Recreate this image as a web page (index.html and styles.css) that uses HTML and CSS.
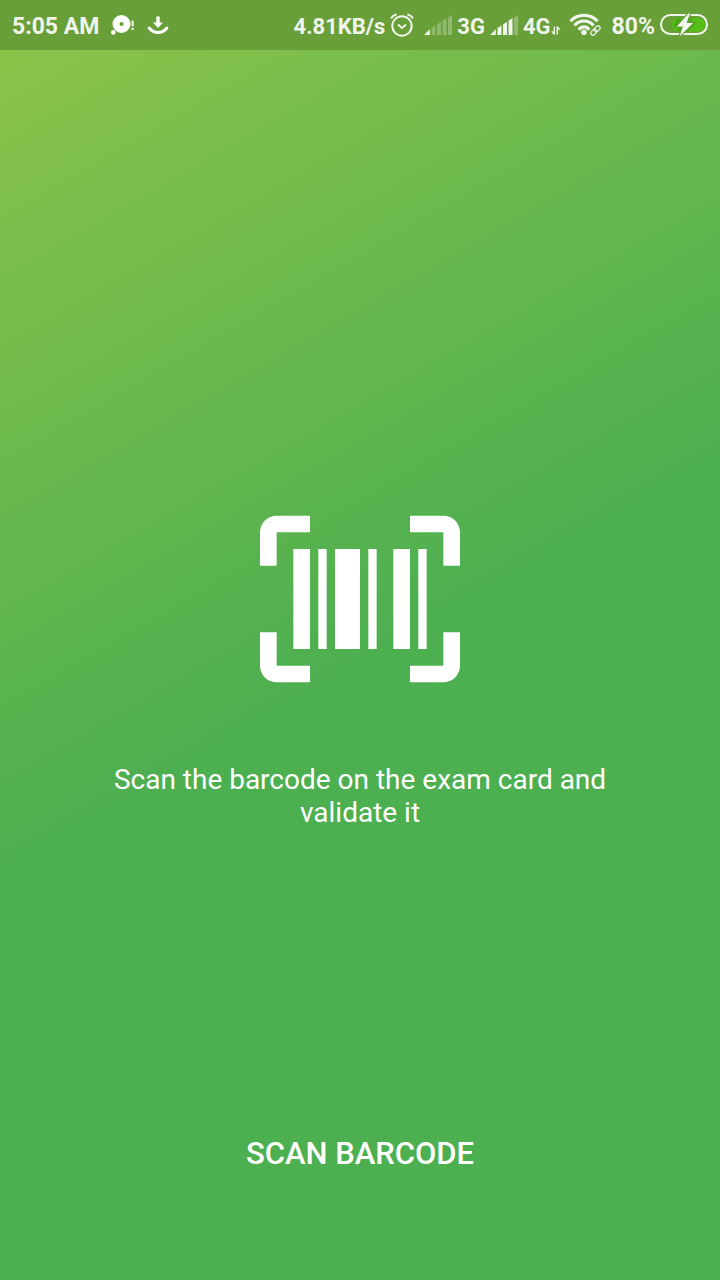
FILE: index.html
```html
<!DOCTYPE html>
<html lang="en">
<head>
<meta charset="utf-8">
<meta name="viewport" content="width=device-width, initial-scale=1">
<title>Scan barcode</title>
<link rel="stylesheet" href="styles.css">
</head>
<body>
<header class="status">
  <div class="status-left">
    <span class="status-text time">5:05 AM</span>
    <svg class="icon" width="24" height="24" viewBox="0 0 24 24" aria-hidden="true">
      <path fill="#fff" fill-rule="evenodd" d="M10.500 2a9 9 0 1 1 0 18 9 9 0 0 1 0-18zM10.500 9a2 2 0 1 0 0 4 2 2 0 0 0 0-4z"/>
      <circle cx="2.300" cy="19.400" r="2.300" fill="#fff"/>
      <path fill="#e8f0e0" d="M20.500 7.500h2.200v6h-2.200zM20.500 15h2.200v2h-2.200z"/>
    </svg>
    <svg class="icon" width="22" height="24" viewBox="0 0 22 24" aria-hidden="true">
      <path fill="#fff" d="M9.300 3.500h3.400v6h3.300l-5 5.500-5-5.500h3.300z"/>
      <path fill="none" stroke="#fff" stroke-width="3" stroke-linecap="round" d="M2.200 15c4.500 6 13.100 6 17.600 0"/>
    </svg>
  </div>
  <div class="status-right">
    <span class="status-text">4.81KB/s</span>
    <svg class="icon alarm" width="24" height="26" viewBox="0 0 24 26" fill="none" stroke="#f0f5eb" stroke-width="2" aria-hidden="true">
      <circle cx="12" cy="14" r="9.700"/>
      <path d="M8 12.500l4 3.500 4-3.500M1 6.500C2 4.500 4 3 6.500 2.200M23 6.500C22 4.500 20 3 17.500 2.200"/>
    </svg>
    <svg class="icon" width="28" height="22" viewBox="0 0 28 22" fill="#f0f5eb" aria-hidden="true">
      <path d="M0 21l5.800-5.800V21z"/>
      <path opacity=".3" d="M7.500 14l4-2.500V21h-4zM13 10.500l4-2.800V21h-4zM18.500 6.800l4-2.800v17h-4zM24 3.500l4-2.500v20h-4z"/>
    </svg>
    <span class="status-text">3G</span>
    <svg class="icon" width="28" height="22" viewBox="0 0 28 22" fill="#f0f5eb" aria-hidden="true">
      <path d="M0 21l5.800-5.800V21zM7.500 14l4-2.500V21h-4zM13 10.500l4-2.800V21h-4zM18.500 6.800l4-2.800v17h-4z"/>
      <path opacity=".3" d="M24 3.500l4-2.500v20h-4z"/>
    </svg>
    <span class="network">
      <span class="status-text">4G</span>
      <svg class="icon" width="10" height="22" viewBox="0 0 10 22" fill="none" stroke="#f0f5eb" stroke-width="1.400" aria-hidden="true">
        <path d="M3.300 12.500v8M3.300 20.200l-2.500-3M6.200 20.500v-8M6.200 12.800l2.500 3"/>
      </svg>
    </span>
    <svg class="icon wifi" width="34" height="24" viewBox="0 0 34 24" fill="none" stroke="#f0f5eb" aria-hidden="true">
      <path stroke-width="3.200" d="M1.500 8.300c7-7.800 20-7.800 27 0M5.500 12.500c5-6 14-6 19 0M9.700 16.700c3-3.700 7.600-3.700 10.600 0"/>
      <circle cx="15" cy="19.300" r="2.800" fill="#f0f5eb" stroke="none"/>
      <g transform="rotate(-45 26.500 17.500)" stroke-width="1.200">
        <rect x="20.800" y="15.400" width="6.500" height="4.200" rx="2.100"/>
        <rect x="25.700" y="15.400" width="6.500" height="4.200" rx="2.100"/>
      </g>
    </svg>
    <span class="status-text percent">80%</span>
    <svg class="icon" width="48" height="24" viewBox="0 0 48 24" aria-hidden="true">
      <rect x="12" y="5" width="33" height="13.500" rx="6" fill="#53bf16"/>
      <path d="M20 5.500h-4L13.500 14h6l-2 4.500h11l8.500-10h-6l1.500-3z" fill="#4aa516"/>
      <rect x="1" y="2" width="46" height="19" rx="9.500" fill="none" stroke="#f0f5eb" stroke-width="2"/>
      <path d="M28.500 .5L17 13.500h6L19.500 23.500 33 10h-6.500L30 .5z" fill="#f5faf0" stroke="#689f38" stroke-width="2.400" paint-order="stroke"/>
    </svg>
  </div>
</header>
<main class="screen">
  <section class="prompt">
    <svg class="barcode" viewBox="0 0 24 24" fill="#fff" aria-hidden="true">
      <path d="M4 6h2v12H4zM7 6h1v12H7zM9 6h3v12H9zM13 6h1v12h-1zM16 6h2v12h-2zM19 6h1v12h-1zM2 4v4H0V4a2 2 0 0 1 2-2h4v2zM22 2a2 2 0 0 1 2 2v4h-2V4h-4V2zM2 16v4h4v2H2a2 2 0 0 1-2-2v-4zM22 20v-4h2v4a2 2 0 0 1-2 2h-4v-2z"/>
    </svg>
    <p class="message">Scan the barcode on the exam card and validate it</p>
  </section>
  <button class="scan" type="button">SCAN BARCODE</button>
</main>
</body>
</html>
```

FILE: styles.css
```css
* {
  box-sizing: border-box;
}

body {
  margin: 0;
  min-height: 100vh;
  display: flex;
  flex-direction: column;
  font-family: Roboto, "Liberation Sans", sans-serif;
  color: #fff;
}

.status {
  display: flex;
  justify-content: space-between;
  align-items: center;
  height: 50px;
  padding: 0 12px;
  background: #689f38;
}

.status-left,
.status-right,
.network {
  display: flex;
  align-items: center;
}

.status-left {
  gap: 12px;
}

.status-right {
  gap: 5px;
}

.status-text {
  padding-top: 3px;
  font-size: 22px;
  line-height: 28px;
  font-weight: 700;
  color: #f0f5eb;
  white-space: nowrap;
}

.time,
.percent {
  font-size: 23px;
}

.icon {
  display: block;
  flex: none;
}

.alarm {
  margin-right: 5px;
}

.wifi {
  margin-left: 3px;
}

.percent {
  margin-left: 4px;
}

.screen {
  flex: 1;
  display: flex;
  flex-direction: column;
  align-items: center;
  justify-content: space-between;
  padding: 0 100px 102px;
  background: linear-gradient(150deg, #8bc34a 0%, #4caf50 50%);
}

.prompt {
  display: flex;
  flex-direction: column;
  align-items: center;
  gap: 64px;
  padding-top: 449px;
}

.barcode {
  display: block;
  width: 200px;
  height: 200px;
}

.message {
  margin: 0;
  font-size: 28px;
  line-height: 33px;
  text-align: center;
}

.scan {
  padding: 6px 16px;
  border: 0;
  background: none;
  color: inherit;
  font-family: inherit;
  font-size: 31px;
  line-height: 36px;
  font-weight: 500;
  cursor: pointer;
}
```
